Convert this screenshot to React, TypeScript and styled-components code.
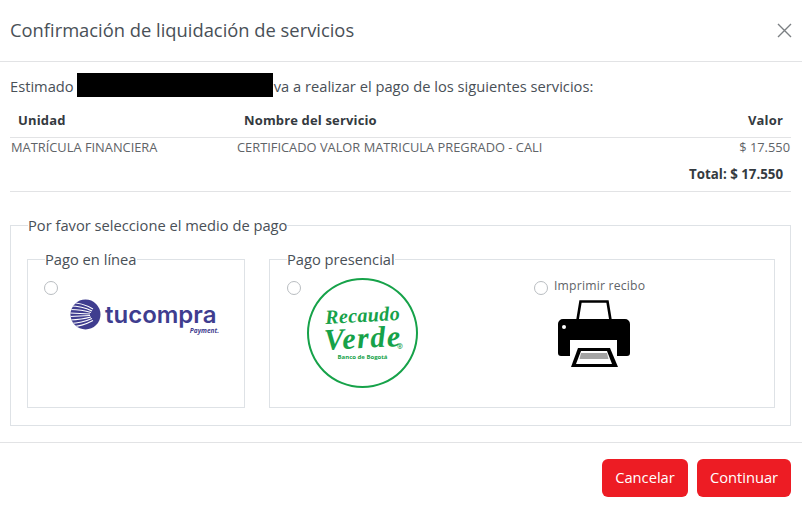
import React from 'react';
import styled, { createGlobalStyle } from 'styled-components';

const GlobalStyle = createGlobalStyle`
  html, body {
    margin: 0;
    padding: 0;
    background: #fff;
  }
  body {
    font-family: 'Open Sans', sans-serif;
    color: #495057;
  }
  * {
    box-sizing: border-box;
  }
`;

const Modal = styled.div`
  width: 802px;
  height: 509px;
  display: flex;
  flex-direction: column;
  background: #fff;
  overflow: hidden;
`;

const Header = styled.header`
  height: 62px;
  flex: none;
  display: flex;
  align-items: center;
  justify-content: space-between;
  padding: 0 10px 2px 10px;
  border-bottom: 1px solid #e2e3e5;
`;

const Title = styled.h5`
  margin: 0;
  font-size: 18.35px;
  font-weight: 400;
  line-height: 24px;
  color: #495057;
`;

const CloseButton = styled.button`
  width: 16px;
  height: 16px;
  padding: 0;
  border: 0;
  background: none;
  display: flex;
  cursor: pointer;
`;

const Body = styled.div`
  flex: 1;
  padding: 11px 11px 0 10px;
`;

const Intro = styled.p`
  margin: 0;
  height: 24px;
  display: flex;
  align-items: flex-start;
  font-size: 14.7px;
  line-height: 26px;
  color: #495057;
`;

const Redacted = styled.span`
  width: 196px;
  height: 24px;
  margin: 0 1px 0 3px;
  background: #000;
`;

const Table = styled.table`
  width: 100%;
  margin-top: 10px;
  border-collapse: collapse;
  table-layout: fixed;
  border-bottom: 1px solid #e2e3e5;
`;

const HeadCell = styled.th<{ $right?: boolean; $pad: number; $width?: number }>`
  height: 30px;
  padding: 0 ${(p) => (p.$right ? 8 : 0)}px 4px ${(p) => p.$pad}px;
  width: ${(p) => (p.$width ? `${p.$width}px` : 'auto')};
  font-size: 13px;
  font-weight: 700;
  letter-spacing: 0.15px;
  color: #343a40;
  text-align: ${(p) => (p.$right ? 'right' : 'left')};
  border-bottom: 1px solid #e2e3e5;
`;

const Cell = styled.td<{ $right?: boolean }>`
  height: 20px;
  padding: 0 ${(p) => (p.$right ? 1 : 0)}px 0 ${(p) => (p.$right ? 0 : 1)}px;
  font-size: 12.85px;
  line-height: 18px;
  color: #5f6468;
  text-align: ${(p) => (p.$right ? 'right' : 'left')};
  white-space: nowrap;
`;

const ServiceCell = styled(Cell)`
  padding-left: 0;
`;

const TotalCell = styled.td`
  height: 34px;
  padding: 0 8px 0 0;
  font-size: 13.3px;
  font-weight: 700;
  color: #343a40;
  text-align: right;
`;

const MethodBox = styled.fieldset`
  margin: 24px 0 0;
  min-width: 0;
  height: 210px;
  padding: 0 16px;
  display: flex;
  gap: 24px;
  border: 1px solid #dee2e6;
`;

const MethodLegend = styled.legend`
  margin-left: 1px;
  padding: 0 0 2px;
  font-size: 14.7px;
  line-height: 18px;
  color: #495057;
`;

const Group = styled.fieldset<{ $width: number }>`
  margin: 14px 0 0;
  min-width: 0;
  width: ${(p) => p.$width}px;
  height: 158px;
  padding: 0;
  flex: none;
  border: 1px solid #dee2e6;
`;

const GroupLegend = styled.legend`
  margin-left: 17px;
  padding: 0 0 2px;
  font-size: 14.7px;
  line-height: 18px;
  color: #495057;
`;

const GroupRow = styled.div`
  height: 100%;
  display: flex;
`;

const Radio = styled.input.attrs({ type: 'radio', name: 'medio' })`
  appearance: none;
  width: 14px;
  height: 14px;
  margin: 0;
  flex: none;
  border: 1px solid #b9bdc1;
  border-radius: 50%;
  background: #fff;
`;

const OnlineOption = styled.label`
  padding: 11px 0 0 16px;
  display: flex;
`;

const TuCompra = styled.div`
  position: relative;
  margin: 18px 0 0 12px;
  width: 147px;
  height: 32px;
  display: flex;
  align-items: center;
  gap: 4px;
`;

const TuCompraName = styled.span`
  font-family: 'Inter', sans-serif;
  font-size: 24px;
  font-weight: 600;
  line-height: 24px;
  color: #3f3d8f;
`;

const TuCompraSub = styled.span`
  position: absolute;
  right: -2px;
  top: 28px;
  font-size: 6.5px;
  font-weight: 700;
  font-style: italic;
  line-height: 8px;
  color: #3f3d8f;
`;

const PresencialOption = styled.label`
  width: 264px;
  padding: 11px 0 0 17px;
  display: flex;
  flex: none;
`;

const Seal = styled.div`
  position: relative;
  width: 111px;
  height: 110px;
  margin: -3px 0 0 6px;
  flex: none;
  padding-top: 25px;
  display: flex;
  flex-direction: column;
  align-items: center;
  border: 2px solid #16a249;
  border-radius: 50%;
  color: #16a249;
`;

const SealTop = styled.span`
  font-family: 'Liberation Serif', serif;
  font-size: 20px;
  font-weight: 700;
  font-style: italic;
  line-height: 20px;
  letter-spacing: 0.4px;
  transform: rotate(-3deg);
`;

const SealMain = styled.span`
  font-family: 'Liberation Serif', serif;
  font-size: 30px;
  font-weight: 700;
  font-style: italic;
  line-height: 26px;
  letter-spacing: 1.5px;
  transform: rotate(-3deg);
`;

const SealMark = styled.span`
  position: absolute;
  left: 88px;
  top: 63px;
  font-size: 7px;
  font-weight: 700;
  line-height: 8px;
`;

const SealFoot = styled.span`
  margin-top: 2px;
  font-size: 6px;
  font-weight: 700;
  line-height: 8px;
`;

const PrintOption = styled.label`
  padding: 9px 0 0 0;
  display: flex;
  flex-direction: column;
  align-items: flex-start;
`;

const PrintLabel = styled.span`
  display: flex;
  align-items: flex-start;
  gap: 6px;
  font-size: 12.2px;
  line-height: 14px;
  letter-spacing: 0.2px;
  color: #5f6468;
`;

const PrintRadio = styled(Radio)`
  margin-top: 2px;
`;

const PrinterIcon = styled.svg`
  margin: 5px 0 0 23px;
`;

const Footer = styled.footer`
  height: 67px;
  flex: none;
  display: flex;
  justify-content: flex-end;
  gap: 9px;
  padding: 16px 11px 0 0;
  border-top: 1px solid #e2e3e5;
`;

const Button = styled.button<{ $width: number }>`
  width: ${(p) => p.$width}px;
  height: 38px;
  padding: 0 0 2px;
  border: 0;
  border-radius: 6px;
  background: #ed1c24;
  color: #fff;
  font-family: 'Open Sans', sans-serif;
  font-size: 14.7px;
  cursor: pointer;
`;

const Globe = () => (
  <svg width="31" height="31" viewBox="0 0 31 31">
    <defs>
      <clipPath id="globe">
        <circle cx="15.5" cy="15.5" r="15" />
      </clipPath>
    </defs>
    <g clipPath="url(#globe)">
      <rect width="31" height="31" fill="#3f3d8f" />
      <g stroke="#fff" strokeWidth="1.1" fill="none">
        <path d="M0 3.5 Q12 3.5 23 10" />
        <path d="M0 7 Q12 7 22 12" />
        <path d="M0 10.5 Q12 10.5 21 13.5" />
        <path d="M0 14 L20 15" />
        <path d="M0 17.5 L20 16.5" />
        <path d="M0 21 Q12 20.5 21 18" />
        <path d="M0 24.5 Q12 24 22 19.5" />
        <path d="M0 28 Q12 27.5 23 21.5" />
      </g>
    </g>
  </svg>
);

const Printer = () => (
  <PrinterIcon width="74" height="70" viewBox="0 0 74 70">
    <path d="M20.5 20 L23.5 1.5 H50.5 L53.5 20" fill="none" stroke="#000" strokeWidth="2.6" />
    <path
      d="M6 19 H68 a5 5 0 0 1 5 5 V53 a3 3 0 0 1 -3 3 H60 V40 H13 V56 H4 a3 3 0 0 1 -3 -3 V24 a5 5 0 0 1 5 -5 Z"
      fill="#000"
    />
    <circle cx="7" cy="27" r="2" fill="#fff" />
    <path d="M21 48 H53 L61 67 H14 Z" fill="#000" />
    <path d="M24 51 H50 L55 64 H19 Z" fill="#fff" />
    <path d="M24 53 H50 L51.5 59 H22.5 Z" fill="#a4a4a4" />
  </PrinterIcon>
);

export default function App() {
  return (
    <Modal>
      <GlobalStyle />
      <Header>
        <Title>Confirmación de liquidación de servicios</Title>
        <CloseButton aria-label="Cerrar">
          <svg width="16" height="16" viewBox="0 0 16 16">
            <path d="M2 2 L15 15 M15 2 L2 15" stroke="#7b7f83" strokeWidth="1.4" fill="none" />
          </svg>
        </CloseButton>
      </Header>
      <Body>
        <Intro>
          Estimado
          <Redacted />
          va a realizar el pago de los siguientes servicios:
        </Intro>
        <Table>
          <thead>
            <tr>
              <HeadCell $pad={8} $width={227}>Unidad</HeadCell>
              <HeadCell $pad={7} $width={400}>Nombre del servicio</HeadCell>
              <HeadCell $pad={0} $right>Valor</HeadCell>
            </tr>
          </thead>
          <tbody>
            <tr>
              <Cell>MATRÍCULA FINANCIERA</Cell>
              <ServiceCell>CERTIFICADO VALOR MATRICULA PREGRADO - CALI</ServiceCell>
              <Cell $right>$ 17.550</Cell>
            </tr>
            <tr>
              <TotalCell colSpan={3}>Total: $ 17.550</TotalCell>
            </tr>
          </tbody>
        </Table>
        <MethodBox>
          <MethodLegend>Por favor seleccione el medio de pago</MethodLegend>
          <Group $width={218}>
            <GroupLegend>Pago en línea</GroupLegend>
            <GroupRow>
              <OnlineOption>
                <Radio />
                <TuCompra>
                  <Globe />
                  <TuCompraName>tucompra</TuCompraName>
                  <TuCompraSub>Payment.</TuCompraSub>
                </TuCompra>
              </OnlineOption>
            </GroupRow>
          </Group>
          <Group $width={506}>
            <GroupLegend>Pago presencial</GroupLegend>
            <GroupRow>
              <PresencialOption>
                <Radio />
                <Seal>
                  <SealTop>Recaudo</SealTop>
                  <SealMain>Verde</SealMain>
                  <SealMark>®</SealMark>
                  <SealFoot>Banco de Bogotá</SealFoot>
                </Seal>
              </PresencialOption>
              <PrintOption>
                <PrintLabel>
                  <PrintRadio />
                  Imprimir recibo
                </PrintLabel>
                <Printer />
              </PrintOption>
            </GroupRow>
          </Group>
        </MethodBox>
      </Body>
      <Footer>
        <Button $width={86}>Cancelar</Button>
        <Button $width={94}>Continuar</Button>
      </Footer>
    </Modal>
  );
}
